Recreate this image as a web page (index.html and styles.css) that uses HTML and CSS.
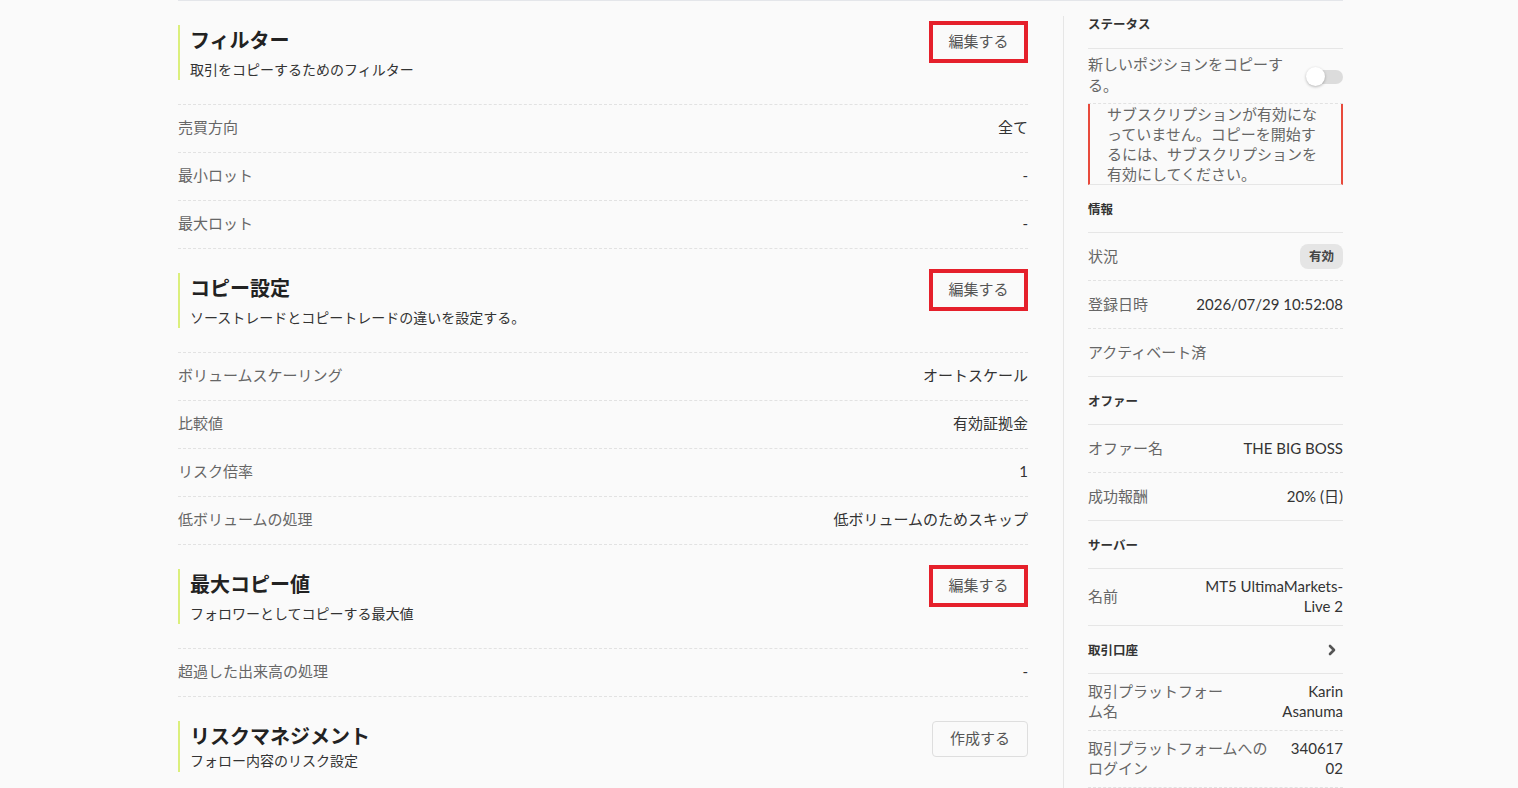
FILE: index.html
```html
<!DOCTYPE html>
<html lang="ja">
<head>
<meta charset="utf-8">
<title>コピー設定</title>
<link rel="stylesheet" href="styles.css">
</head>
<body>
<div class="page">
  <div class="layout">
    <main class="main">
      <section class="block">
        <div class="block-head">
          <div class="head-text">
            <h2 class="head-title">フィルター</h2>
            <p class="head-sub">取引をコピーするためのフィルター</p>
          </div>
          <button class="btn btn-marked">編集する</button>
        </div>
        <div class="row"><span class="label">売買方向</span><span class="value">全て</span></div>
        <div class="row"><span class="label">最小ロット</span><span class="value">-</span></div>
        <div class="row"><span class="label">最大ロット</span><span class="value">-</span></div>
      </section>

      <section class="block">
        <div class="block-head">
          <div class="head-text">
            <h2 class="head-title">コピー設定</h2>
            <p class="head-sub">ソーストレードとコピートレードの違いを設定する。</p>
          </div>
          <button class="btn btn-marked">編集する</button>
        </div>
        <div class="row"><span class="label">ボリュームスケーリング</span><span class="value">オートスケール</span></div>
        <div class="row"><span class="label">比較値</span><span class="value">有効証拠金</span></div>
        <div class="row"><span class="label">リスク倍率</span><span class="value">1</span></div>
        <div class="row"><span class="label">低ボリュームの処理</span><span class="value">低ボリュームのためスキップ</span></div>
      </section>

      <section class="block">
        <div class="block-head">
          <div class="head-text">
            <h2 class="head-title">最大コピー値</h2>
            <p class="head-sub">フォロワーとしてコピーする最大値</p>
          </div>
          <button class="btn btn-marked">編集する</button>
        </div>
        <div class="row"><span class="label">超過した出来高の処理</span><span class="value">-</span></div>
      </section>

      <section class="block">
        <div class="block-head">
          <div class="head-text compact">
            <h2 class="head-title">リスクマネジメント</h2>
            <p class="head-sub">フォロー内容のリスク設定</p>
          </div>
          <button class="btn">作成する</button>
        </div>
      </section>
    </main>

    <div class="vline"></div>

    <aside class="side">
      <div class="side-head first">ステータス</div>
      <div class="side-row toggle-row">
        <span class="side-label">新しいポジションをコピーす<br>る。</span>
        <span class="toggle"><span class="toggle-knob"></span></span>
      </div>
      <div class="warn">サブスクリプションが有効にな<br>っていません。コピーを開始す<br>るには、サブスクリプションを<br>有効にしてください。</div>

      <div class="side-head">情報</div>
      <div class="side-row"><span class="side-label">状況</span><span class="badge">有効</span></div>
      <div class="side-row"><span class="side-label">登録日時</span><span class="side-value">2026/07/29 10:52:08</span></div>
      <div class="side-row last"><span class="side-label">アクティベート済</span><span class="side-value"></span></div>

      <div class="side-head">オファー</div>
      <div class="side-row"><span class="side-label">オファー名</span><span class="side-value">THE BIG BOSS</span></div>
      <div class="side-row last"><span class="side-label">成功報酬</span><span class="side-value">20% (日)</span></div>

      <div class="side-head">サーバー</div>
      <div class="side-row last two"><span class="side-label">名前</span><span class="side-value">MT5 UltimaMarkets-<br>Live 2</span></div>

      <div class="side-head head-link">
        <span>取引口座</span>
        <svg class="chev" width="10" height="12" viewBox="0 0 10 12"><polyline points="3,2 7,6 3,10" fill="none" stroke="#555" stroke-width="2.6" stroke-linecap="round" stroke-linejoin="round"/></svg>
      </div>
      <div class="side-row two"><span class="side-label">取引プラットフォー<br>ム名</span><span class="side-value">Karin<br>Asanuma</span></div>
      <div class="side-row two"><span class="side-label">取引プラットフォームへの<br>ログイン</span><span class="side-value">340617<br>02</span></div>
    </aside>
  </div>
</div>
</body>
</html>
```

FILE: styles.css
```css
html, body {
  margin: 0;
  padding: 0;
  background: #fafafa;
}

body {
  font-family: Lato, "Noto Sans CJK JP", sans-serif;
  color: #333;
}

.page {
  padding-left: 178px;
}

.layout {
  width: 1165px;
  display: flex;
  align-items: stretch;
  border-top: 1px solid #e4e6ea;
}

.main {
  width: 850px;
  flex: none;
}

.vline {
  width: 1px;
  flex: none;
  background: #e6e6e6;
  margin: 15px 24px 0 35px;
}

.side {
  width: 255px;
  flex: none;
}

/* left blocks */
.block-head {
  display: flex;
  justify-content: space-between;
  align-items: flex-start;
  padding: 24px 0;
  border-bottom: 1px dashed #e2e2e2;
}

.head-text {
  border-left: 2px solid #dbef7c;
  padding-left: 10px;
}

.head-title {
  margin: 0;
  font-size: 20px;
  line-height: 30px;
  font-weight: 700;
  color: #222;
}

.head-sub {
  margin: 4px 0 0;
  font-size: 14px;
  line-height: 21px;
  color: #333;
}

.head-text.compact .head-sub {
  margin-top: 0;
  line-height: 19px;
  padding-bottom: 2px;
}

.btn {
  font-family: inherit;
  font-size: 15px;
  color: #555;
  background: #fafafa;
  border: 1px solid #dedede;
  border-radius: 4px;
  width: 96px;
  height: 36px;
  padding: 0 0 3px;
  cursor: pointer;
}

.btn-marked {
  width: 99px;
  height: 42px;
  margin-top: -4px;
  border: 4px solid #e5202b;
  border-radius: 0;
}

.row {
  display: flex;
  justify-content: space-between;
  align-items: center;
  height: 48px;
  box-sizing: border-box;
  padding-bottom: 4px;
  border-bottom: 1px dashed #e2e2e2;
  font-size: 15px;
}

.label {
  color: #666;
}

.value {
  color: #333;
}

/* side */
.side-head {
  height: 48px;
  box-sizing: border-box;
  display: flex;
  align-items: center;
  justify-content: space-between;
  border-bottom: 1px solid #e6e6e6;
  font-size: 12.5px;
  font-weight: 700;
  color: #333;
}

.side-head.first {
  padding-bottom: 3px;
}

.chev {
  margin-right: 6px;
}

.side-row {
  display: flex;
  justify-content: space-between;
  align-items: center;
  min-height: 48px;
  box-sizing: border-box;
  padding: 7px 0 9px;
  border-bottom: 1px dashed #e2e2e2;
  font-size: 15px;
  line-height: 20px;
}

.side-row.two {
  padding: 7px 0 9px;
  line-height: 20px;
}

.side-row.last {
  border-bottom-style: solid;
  border-bottom-color: #e6e6e6;
}

.side-label {
  color: #666;
}

.side-value {
  color: #333;
  text-align: right;
}

.toggle-row {
  padding: 5px 0 7px;
  line-height: 21px;
}

.toggle {
  position: relative;
  width: 34px;
  height: 14px;
  border-radius: 7px;
  background: #dcdcdc;
  margin-top: 4px;
}

.toggle-knob {
  position: absolute;
  left: -3px;
  top: -3px;
  width: 19px;
  height: 19px;
  border-radius: 50%;
  background: #ffffff;
  box-shadow: 0 1px 3px rgba(0, 0, 0, 0.28);
}

.warn {
  border-left: 2px solid #e84a3c;
  border-right: 2px solid #e84a3c;
  border-bottom: 1px solid #e6e6e6;
  padding: 0 10px 0 17px;
  font-size: 15px;
  line-height: 20px;
  color: #666;
}

.badge {
  background: #e5e5e5;
  border-radius: 8px;
  font-size: 12.5px;
  font-weight: 700;
  color: #444;
  padding: 3px 9px 3px;
  line-height: 19px;
  margin-top: 2px;
}
```
